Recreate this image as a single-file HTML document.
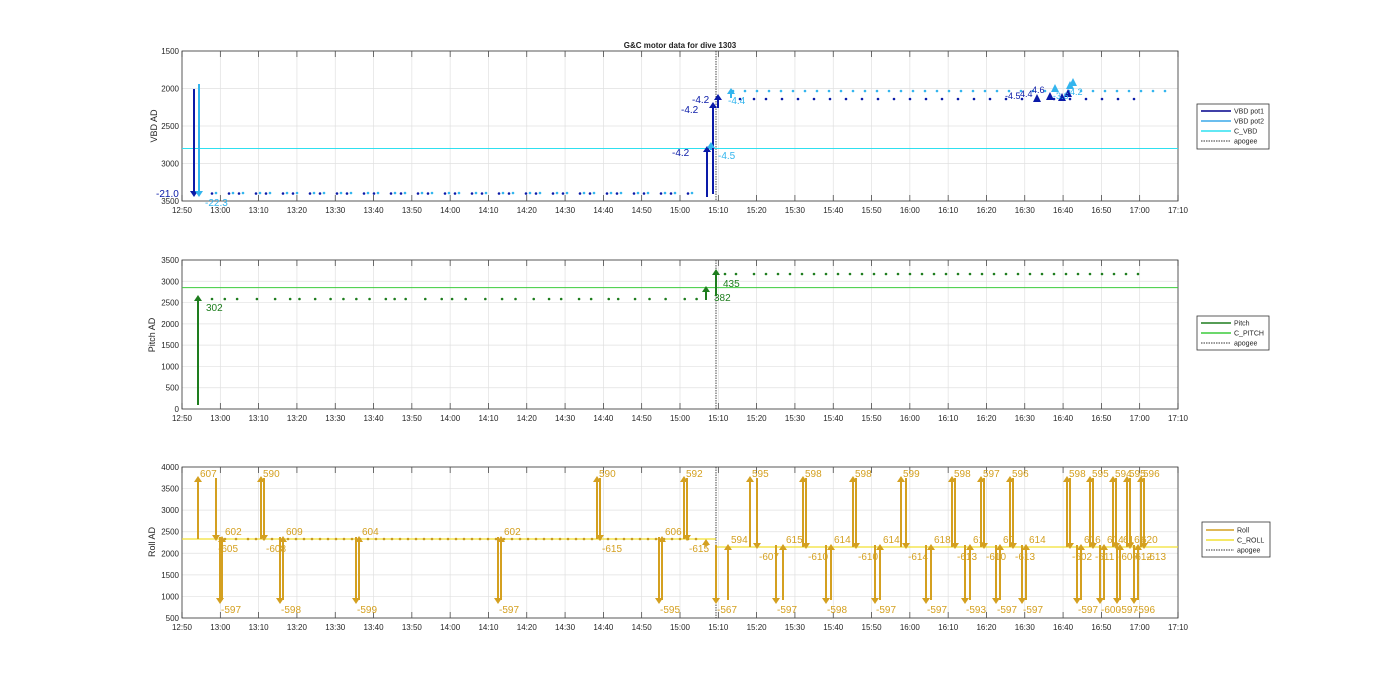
<!DOCTYPE html>
<html><head><meta charset="utf-8"><style>
body{margin:0;background:#fff;width:1400px;height:693px;overflow:hidden}
svg text{font-family:"Liberation Sans",sans-serif}
</style></head><body>
<svg id="s" width="1400" height="693" xmlns="http://www.w3.org/2000/svg">
<text x="680" y="48" font-size="8" font-weight="bold" text-anchor="middle" fill="#222">G&amp;C motor data for dive 1303</text>
<g id="g"></g>
<text transform="translate(157,126) rotate(-90)" font-size="9" text-anchor="middle" fill="#262626">VBD AD</text>
<text transform="translate(155,335) rotate(-90)" font-size="9" text-anchor="middle" fill="#262626">Pitch AD</text>
<text transform="translate(155,542) rotate(-90)" font-size="9" text-anchor="middle" fill="#262626">Roll AD</text>
<g font-size="7" fill="#262626">
<rect x="1197" y="104" width="72" height="45" fill="#fff" stroke="#333" stroke-width="0.8"/>
<line x1="1201" y1="111" x2="1231" y2="111" stroke="#00008b" stroke-width="1.5"/><text x="1234" y="113.5">VBD pot1</text>
<line x1="1201" y1="121" x2="1231" y2="121" stroke="#3aa8e8" stroke-width="1.5"/><text x="1234" y="123.5">VBD pot2</text>
<line x1="1201" y1="131" x2="1231" y2="131" stroke="#2ee0f0" stroke-width="1.5"/><text x="1234" y="133.5">C_VBD</text>
<line x1="1201" y1="141" x2="1231" y2="141" stroke="#333" stroke-dasharray="1.5,1"/><text x="1234" y="143.5">apogee</text>
<rect x="1197" y="316" width="72" height="34" fill="#fff" stroke="#333" stroke-width="0.8"/>
<line x1="1201" y1="323" x2="1231" y2="323" stroke="#1e7d1e" stroke-width="1.5"/><text x="1234" y="325.5">Pitch</text>
<line x1="1201" y1="333" x2="1231" y2="333" stroke="#3ccc3c" stroke-width="1.5"/><text x="1234" y="335.5">C_PITCH</text>
<line x1="1201" y1="343" x2="1231" y2="343" stroke="#333" stroke-dasharray="1.5,1"/><text x="1234" y="345.5">apogee</text>
<rect x="1202" y="522" width="68" height="35" fill="#fff" stroke="#333" stroke-width="0.8"/>
<line x1="1206" y1="530" x2="1234" y2="530" stroke="#d4a020" stroke-width="1.5"/><text x="1237" y="532.5">Roll</text>
<line x1="1206" y1="540" x2="1234" y2="540" stroke="#f2e030" stroke-width="1.5"/><text x="1237" y="542.5">C_ROLL</text>
<line x1="1206" y1="550" x2="1234" y2="550" stroke="#333" stroke-dasharray="1.5,1"/><text x="1237" y="552.5">apogee</text>
</g>
</svg>
<script>
var g=document.getElementById('g'),NS='http://www.w3.org/2000/svg';
function el(t,a,txt){var e=document.createElementNS(NS,t);for(var k in a)e.setAttribute(k,a[k]);if(txt!==undefined)e.textContent=txt;g.appendChild(e);return e;}
var X0=182,X1=1178,dx=(X1-X0)/26;
var times=['12:50','13:00','13:10','13:20','13:30','13:40','13:50','14:00','14:10','14:20','14:30','14:40','14:50','15:00','15:10','15:20','15:30','15:40','15:50','16:00','16:10','16:20','16:30','16:40','16:50','17:00','17:10'];
function axes(y0,y1,yt){
  for(var i=0;i<=26;i++){var x=X0+i*dx;el('line',{x1:x,y1:y0,x2:x,y2:y1,stroke:'#e0e0e0','stroke-width':0.7});
   el('line',{x1:x,y1:y0,x2:x,y2:y0+6,stroke:'#333','stroke-width':0.7});
   el('line',{x1:x,y1:y1,x2:x,y2:y1-6,stroke:'#333','stroke-width':0.7});
   el('text',{x:x,y:y1+12,'font-size':8,'text-anchor':'middle',fill:'#262626'},times[i]);}
  yt.forEach(function(t){el('line',{x1:X0,y1:t[0],x2:X1,y2:t[0],stroke:'#e0e0e0','stroke-width':0.7});
   el('text',{x:X0-3,y:t[0]+3,'font-size':8,'text-anchor':'end',fill:'#262626'},t[1]);});
  el('rect',{x:X0,y:y0,width:X1-X0,height:y1-y0,fill:'none',stroke:'#333','stroke-width':0.8});
}
axes(51,201,[[51,'1500'],[88.5,'2000'],[126,'2500'],[163.5,'3000'],[201,'3500']]);
var mt=[];for(var v=0;v<=3500;v+=500)mt.push([409-v*149/3500,String(v)]);axes(260,409,mt);
var bt=[];for(var v=500;v<=4000;v+=500)bt.push([618-(v-500)*151/3500,String(v)]);axes(467,618,bt);
function line(x1,y1,x2,y2,c,w,da){var a={x1:x1,y1:y1,x2:x2,y2:y2,stroke:c,'stroke-width':w||1.2};if(da)a['stroke-dasharray']=da;el('line',a);}
function dot(x,y,c){el('circle',{cx:x,cy:y,r:1.3,fill:c});}
function arrow(x,y1,y2,c,w){line(x,y1,x,y2+(y2<y1?4:-4),c,w||2);var d=y2<y1?6:-6;el('path',{d:'M'+(x-4)+','+(y2+d)+'L'+(x+4)+','+(y2+d)+'L'+x+','+y2+'Z',fill:c});}
function txt(x,y,s,c,fs){el('text',{x:x,y:y,'font-size':fs||10,fill:c},s);}
[[51,201],[260,409],[467,618]].forEach(function(r){line(716,r[0],716,r[1],'#333',0.9,'1.5,1');});
var DB='#0a1aa8',LB='#33b5ee',CY='#2ee0f0';
line(X0,148.5,X1,148.5,CY,1);
for(var x=212;x<692;x+=9+((x*7)%9)){dot(x,193.5,DB);dot(x+4,193,LB);}
for(var x=740;x<1145;x+=10+((x*5)%8)){dot(x,99,DB);}
for(var x=733;x<1175;x+=9+((x*3)%9)){dot(x,91,LB);}
arrow(194,89,197,DB);arrow(199,84,197,LB);
txt(156,197,'-21.0',DB);txt(205,206,'-22.3',LB);
arrow(707,197,146,DB);arrow(713,194,102,DB);arrow(718,108,94,DB);arrow(711,150,142,LB);arrow(731,98,88,LB);
txt(672,156,'-4.2',DB);txt(681,113,'-4.2',DB);txt(692,103,'-4.2',DB);txt(718,159,'-4.5',LB);txt(728,104,'-4.4',LB);
[[1037,98,DB],[1050,96,DB],[1062,97,DB],[1068,93,DB],[1055,88,LB],[1070,85,LB],[1073,82,LB]].forEach(function(a){el('path',{d:'M'+(a[0]-4)+','+(a[1]+4)+'L'+(a[0]+4)+','+(a[1]+4)+'L'+a[0]+','+(a[1]-4)+'Z',fill:a[2]});});
txt(1005,99,'-4.5',DB,9);txt(1020,97,'4.4',DB,9);txt(1032,93,'4.6',DB,9);txt(1053,99,'-3.6',LB,9);txt(1070,95,'4.2',LB,9);
var G='#1e7d1e',LG='#3ccc3c';
line(X0,287.6,X1,287.6,LG,1);
for(var x=212;x<700;x+=8+((x*7)%10)*1.2){dot(x,299,G);}
for(var x=725;x<1145;x+=10+((x*5)%12)){dot(x,274,G);}
arrow(198,405,295,G);arrow(706,300,286,G);arrow(716,296,269,G);
txt(206,311,'302',G);txt(723,287,'435',G);txt(714,301,'382',G);
var O='#d4a020',Y='#f2e030';
line(X0,539,716,539,Y,1.2);line(716,547,X1,547,Y,1.2);
for(var x=225;x<700;x+=8+((x*3)%8)){dot(x,539,'#c89a20');}
var L=[[198,'u','607'],[216,'d','-605',545],[220,'D','-597'],[222,'U','602'],[261,'u','590'],[264,'d','-608',545],[280,'D','-598'],[283,'U','609'],
[356,'D','-599'],[359,'U','604'],[498,'D','-597'],[501,'U','602'],[597,'u','590'],[600,'d','-615',545],[659,'D','-595'],[662,'U','606'],[684,'u','592'],[687,'d','-615',545],
[716,'D','-567'],[728,'U','594'],[750,'u','595'],[757,'d','-607'],[776,'D','-597'],[783,'U','615'],[803,'u','598'],[806,'d','-610'],[826,'D','-598'],[831,'U','614'],
[853,'u','598'],[856,'d','-610'],[875,'D','-597'],[880,'U','614'],[901,'u','599'],[906,'d','-614'],[926,'D','-597'],[931,'U','618'],[952,'u','598'],[955,'d','-613'],
[965,'D','-593'],[970,'U','61'],[981,'u','597'],[984,'d','-610'],[996,'D','-597'],[1000,'U','60'],[1010,'u','596'],[1013,'d','-613'],[1022,'D','-597'],[1026,'U','614'],
[1067,'u','598'],[1070,'d','-602'],[1077,'D','-597'],[1081,'U','616'],[1090,'u','595'],[1093,'d','-611'],[1100,'D','-600'],[1104,'U','614'],[1113,'u','594'],[1116,'d','-607'],
[1117,'D','-597'],[1120,'U','616'],[1127,'u','595'],[1130,'d','-612'],[1134,'D','-596'],[1138,'U','620'],[1141,'u','596'],[1144,'d','-613']];
L.forEach(function(a){var x=a[0],t=a[1],s=a[2],base=x<716?539:547;
 if(t=='u'){arrow(x,base,476,O);txt(x+2,477,s,O);}
 else if(t=='d'){arrow(x,478,base+2,O);txt(x+2,base+13,s,O);}
 else if(t=='D'){arrow(x,base-2,604,O);txt(x+1,613,s,O);}
 else {arrow(x,600,base-3,O);txt(x+3,base-4,s,O);}
});
arrow(706,547,539,O,1.5);
</script>
</body></html>
